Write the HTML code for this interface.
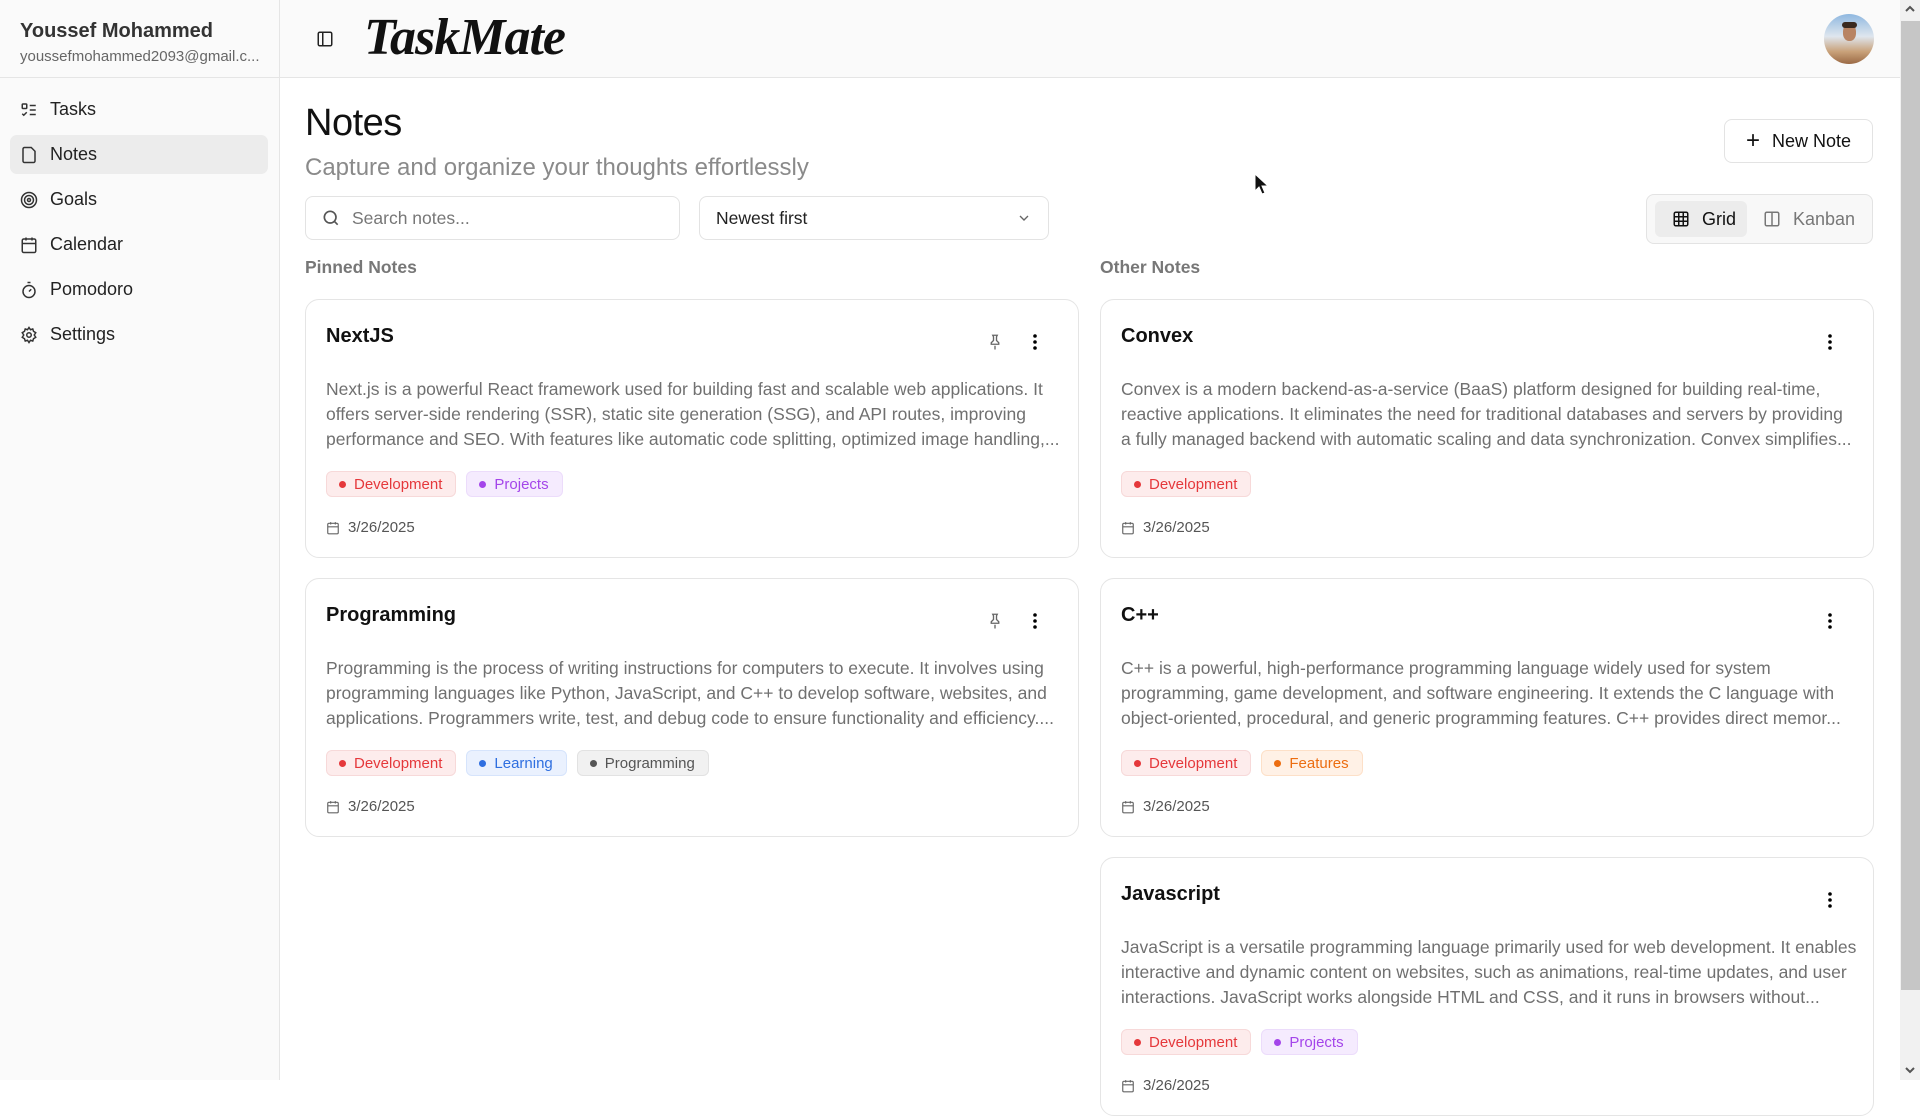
<!DOCTYPE html>
<html><head><meta charset="utf-8"><style>
*{box-sizing:border-box;margin:0;padding:0}
body{width:1920px;height:1080px;overflow:hidden;background:#fff;font-family:"Liberation Sans",sans-serif;color:#111;position:relative}
.sb{position:absolute;left:0;top:0;width:280px;height:1080px;background:#fafafa;border-right:1px solid #e5e5e5}
.sbh{height:78px;border-bottom:1px solid #e5e5e5;padding:20px 0 0 20px}
.sbh .n{font-size:20px;font-weight:bold;color:#333}
.sbh .e{font-size:15px;color:#666;margin-top:5px}
.nav{position:absolute;left:10px;width:258px;height:39px;border-radius:7px;display:flex;align-items:center;padding-left:10px;font-size:18px;color:#222}
.nav svg{margin-right:12px}
.nav.act{background:#ececec}
.top{position:absolute;left:280px;top:0;right:20px;height:78px;border-bottom:1px solid #e5e5e5;background:#fafafa}
.logo{position:absolute;left:364px;top:8px;font-family:"Liberation Serif",serif;font-style:italic;font-weight:bold;font-size:52px;letter-spacing:-1px;color:#111}
.h1{position:absolute;left:305px;top:102px;font-size:38px;color:#111;letter-spacing:-.5px;font-weight:normal;-webkit-text-stroke:0}
.sub{position:absolute;left:305px;top:154px;font-size:24px;color:#8a8a8a}
.btn{position:absolute;border:1px solid #e3e3e3;border-radius:8px;background:#fff}
.sec{position:absolute;top:257px;font-size:17.5px;font-weight:bold;color:#777}
.card{position:absolute;width:774px;border:1px solid #e5e5e5;border-radius:14px;background:#fff}
.card .t{position:absolute;left:20px;top:25px;font-size:20px;font-weight:bold;color:#111}
.card .d{position:absolute;left:20px;top:77px;width:735px;font-size:17.5px;line-height:25px;color:#707070}
.card .d div{white-space:nowrap;overflow:hidden}
.tags{position:absolute;left:20px;top:171px;display:flex;gap:10px}
.tag{height:26px;border-radius:6px;padding:0 13px 0 12px;font-size:15px;display:flex;align-items:center;border:1px solid}
.tag i{width:7px;height:7px;border-radius:50%;margin-right:8px;display:inline-block}
.red{background:#fdecec;color:#e5383b;border-color:#f7d9d9}.red i{background:#e5383b}
.pur{background:#f5ebfe;color:#a445ea;border-color:#ecdcfb}.pur i{background:#a445ea}
.blu{background:#eaf1fe;color:#2f6fe0;border-color:#d6e4fc}.blu i{background:#2f6fe0}
.gry{background:#f1f1f1;color:#555;border-color:#e2e2e2}.gry i{background:#555}
.ora{background:#fff1e6;color:#ec6d10;border-color:#fde0c8}.ora i{background:#ec6d10}
.date{position:absolute;left:20px;top:219px;font-size:15px;color:#555;display:flex;align-items:center;gap:8px}
.pin{position:absolute;left:680px;top:32px}
.dots{position:absolute;left:726px;top:33px}
.scroll{position:absolute;right:0;top:0;width:20px;height:1080px;background:#f1f1f1}
</style></head><body>
<div class="sb">
 <div class="sbh"><div class="n">Youssef Mohammed</div><div class="e">youssefmohammed2093@gmail.c...</div></div>
</div>
<div class="nav" style="top:90px"><svg width="18" height="18" viewBox="0 0 24 24" fill="none" stroke="#333" stroke-width="2"><rect x="3" y="4" width="6" height="6" rx="1"/><path d="m3 17 2 2 4-4M13 6h8M13 12h8M13 18h8"/></svg>Tasks</div>
<div class="nav act" style="top:135px"><svg width="18" height="18" viewBox="0 0 24 24" fill="none" stroke="#333" stroke-width="2"><path d="M15 2H6a2 2 0 0 0-2 2v16a2 2 0 0 0 2 2h12a2 2 0 0 0 2-2V7z"/></svg>Notes</div>
<div class="nav" style="top:180px"><svg width="18" height="18" viewBox="0 0 24 24" fill="none" stroke="#333" stroke-width="2"><circle cx="12" cy="12" r="10"/><circle cx="12" cy="12" r="6"/><circle cx="12" cy="12" r="2"/></svg>Goals</div>
<div class="nav" style="top:225px"><svg width="18" height="18" viewBox="0 0 24 24" fill="none" stroke="#333" stroke-width="2"><rect x="3" y="4" width="18" height="18" rx="2"/><path d="M16 2v4M8 2v4M3 10h18"/></svg>Calendar</div>
<div class="nav" style="top:270px"><svg width="18" height="18" viewBox="0 0 24 24" fill="none" stroke="#333" stroke-width="2"><circle cx="12" cy="14" r="8"/><path d="M10 2h4M12 14l3-3"/></svg>Pomodoro</div>
<div class="nav" style="top:315px"><svg width="18" height="18" viewBox="0 0 24 24" fill="none" stroke="#333" stroke-width="2"><circle cx="12" cy="12" r="3"/><path d="M12 2l2 3 3-1 1 3 3 2-2 3 2 3-3 2-1 3-3-1-2 3-2-3-3 1-1-3-3-2 2-3-2-3 3-2 1-3 3 1z"/></svg>Settings</div>
<div class="top"></div>
<svg style="position:absolute;left:316px;top:30px" width="18" height="18" viewBox="0 0 24 24" fill="none" stroke="#222" stroke-width="2"><rect x="3" y="3" width="18" height="18" rx="2"/><path d="M9 3v18"/></svg>
<div class="logo">TaskMate</div>
<div style="position:absolute;left:1824px;top:14px;width:50px;height:50px;border-radius:50%;background:linear-gradient(#8fb8e0 0%,#dfe6ee 45%,#c9a27a 75%,#9b6a45 100%);overflow:hidden"><div style="position:absolute;left:19px;top:10px;width:13px;height:17px;border-radius:45%;background:#b88464"></div><div style="position:absolute;left:18px;top:8px;width:15px;height:6px;border-radius:5px;background:#3a2a20"></div></div>
<div class="h1">Notes</div>
<div class="sub">Capture and organize your thoughts effortlessly</div>
<div class="btn" style="left:1724px;top:119px;width:149px;height:44px;display:flex;align-items:center;justify-content:center;gap:12px;font-size:18px"><span style="font-size:24px;line-height:1">+</span>New Note</div>
<div class="btn" style="left:305px;top:196px;width:375px;height:44px;display:flex;align-items:center;padding-left:15px;font-size:17.5px;color:#777"><svg width="20" height="20" viewBox="0 0 24 24" fill="none" stroke="#555" stroke-width="2" style="margin-right:11px"><circle cx="11" cy="11" r="7"/><path d="m20 20-4-4"/></svg>Search notes...</div>
<div class="btn" style="left:699px;top:196px;width:350px;height:44px;display:flex;align-items:center;padding-left:16px;font-size:17.5px;color:#222">Newest first<svg style="position:absolute;right:16px" width="16" height="16" viewBox="0 0 24 24" fill="none" stroke="#666" stroke-width="2"><path d="m6 9 6 6 6-6"/></svg></div>
<div class="btn" style="left:1646px;top:194px;width:227px;height:50px;background:#f8f8f8">
 <div style="position:absolute;left:8px;top:6px;width:92px;height:36px;border-radius:6px;background:#ececec;display:flex;align-items:center;padding-left:17px;font-size:18px;color:#111"><svg width="18" height="18" viewBox="0 0 24 24" fill="none" stroke="#111" stroke-width="2" style="margin-right:12px"><rect x="3" y="3" width="18" height="18" rx="2"/><path d="M3 9h18M3 15h18M9 3v18M15 3v18"/></svg>Grid</div>
 <div style="position:absolute;left:116px;top:6px;height:36px;display:flex;align-items:center;font-size:18px;color:#777"><svg width="18" height="18" viewBox="0 0 24 24" fill="none" stroke="#777" stroke-width="2" style="margin-right:12px"><rect x="3" y="3" width="18" height="18" rx="2"/><path d="M12 3v18"/></svg>Kanban</div>
</div>
<div class="sec" style="left:305px">Pinned Notes</div>
<div class="sec" style="left:1100px">Other Notes</div>

<div class="card" style="left:305px;top:299px;height:259px">
 <div class="t">NextJS</div>
 <svg class="pin" width="18" height="20" viewBox="0 0 24 24" fill="none" stroke="#666" stroke-width="1.8"><path d="M12 17v5M9 3h6l-1 2v5l3 3v2H7v-2l3-3V5z"/></svg>
 <svg class="dots" width="6" height="18" viewBox="0 0 6 18"><circle cx="3" cy="3" r="1.8"/><circle cx="3" cy="9" r="1.8"/><circle cx="3" cy="15" r="1.8"/></svg>
 <div class="d"><div>Next.js is a powerful React framework used for building fast and scalable web applications. It</div><div>offers server-side rendering (SSR), static site generation (SSG), and API routes, improving</div><div>performance and SEO. With features like automatic code splitting, optimized image handling,...</div></div>
 <div class="tags"><div class="tag red"><i></i>Development</div><div class="tag pur"><i></i>Projects</div></div>
 <div class="date"><svg width="14" height="14" viewBox="0 0 24 24" fill="none" stroke="#666" stroke-width="2"><rect x="3" y="4" width="18" height="18" rx="2"/><path d="M16 2v4M8 2v4M3 10h18"/></svg>3/26/2025</div>
</div>
<div class="card" style="left:305px;top:578px;height:259px">
 <div class="t">Programming</div>
 <svg class="pin" width="18" height="20" viewBox="0 0 24 24" fill="none" stroke="#666" stroke-width="1.8"><path d="M12 17v5M9 3h6l-1 2v5l3 3v2H7v-2l3-3V5z"/></svg>
 <svg class="dots" width="6" height="18" viewBox="0 0 6 18"><circle cx="3" cy="3" r="1.8"/><circle cx="3" cy="9" r="1.8"/><circle cx="3" cy="15" r="1.8"/></svg>
 <div class="d"><div>Programming is the process of writing instructions for computers to execute. It involves using</div><div>programming languages like Python, JavaScript, and C++ to develop software, websites, and</div><div>applications. Programmers write, test, and debug code to ensure functionality and efficiency....</div></div>
 <div class="tags"><div class="tag red"><i></i>Development</div><div class="tag blu"><i></i>Learning</div><div class="tag gry"><i></i>Programming</div></div>
 <div class="date"><svg width="14" height="14" viewBox="0 0 24 24" fill="none" stroke="#666" stroke-width="2"><rect x="3" y="4" width="18" height="18" rx="2"/><path d="M16 2v4M8 2v4M3 10h18"/></svg>3/26/2025</div>
</div>
<div class="card" style="left:1100px;top:299px;height:259px">
 <div class="t">Convex</div>
 <svg class="dots" width="6" height="18" viewBox="0 0 6 18"><circle cx="3" cy="3" r="1.8"/><circle cx="3" cy="9" r="1.8"/><circle cx="3" cy="15" r="1.8"/></svg>
 <div class="d"><div>Convex is a modern backend-as-a-service (BaaS) platform designed for building real-time,</div><div>reactive applications. It eliminates the need for traditional databases and servers by providing</div><div>a fully managed backend with automatic scaling and data synchronization. Convex simplifies...</div></div>
 <div class="tags"><div class="tag red"><i></i>Development</div></div>
 <div class="date"><svg width="14" height="14" viewBox="0 0 24 24" fill="none" stroke="#666" stroke-width="2"><rect x="3" y="4" width="18" height="18" rx="2"/><path d="M16 2v4M8 2v4M3 10h18"/></svg>3/26/2025</div>
</div>
<div class="card" style="left:1100px;top:578px;height:259px">
 <div class="t">C++</div>
 <svg class="dots" width="6" height="18" viewBox="0 0 6 18"><circle cx="3" cy="3" r="1.8"/><circle cx="3" cy="9" r="1.8"/><circle cx="3" cy="15" r="1.8"/></svg>
 <div class="d"><div>C++ is a powerful, high-performance programming language widely used for system</div><div>programming, game development, and software engineering. It extends the C language with</div><div>object-oriented, procedural, and generic programming features. C++ provides direct memor...</div></div>
 <div class="tags"><div class="tag red"><i></i>Development</div><div class="tag ora"><i></i>Features</div></div>
 <div class="date"><svg width="14" height="14" viewBox="0 0 24 24" fill="none" stroke="#666" stroke-width="2"><rect x="3" y="4" width="18" height="18" rx="2"/><path d="M16 2v4M8 2v4M3 10h18"/></svg>3/26/2025</div>
</div>
<div class="card" style="left:1100px;top:857px;height:259px">
 <div class="t">Javascript</div>
 <svg class="dots" width="6" height="18" viewBox="0 0 6 18"><circle cx="3" cy="3" r="1.8"/><circle cx="3" cy="9" r="1.8"/><circle cx="3" cy="15" r="1.8"/></svg>
 <div class="d"><div>JavaScript is a versatile programming language primarily used for web development. It enables</div><div>interactive and dynamic content on websites, such as animations, real-time updates, and user</div><div>interactions. JavaScript works alongside HTML and CSS, and it runs in browsers without...</div></div>
 <div class="tags"><div class="tag red"><i></i>Development</div><div class="tag pur"><i></i>Projects</div></div>
 <div class="date"><svg width="14" height="14" viewBox="0 0 24 24" fill="none" stroke="#666" stroke-width="2"><rect x="3" y="4" width="18" height="18" rx="2"/><path d="M16 2v4M8 2v4M3 10h18"/></svg>3/26/2025</div>
</div>
<div class="scroll"><div style="position:absolute;left:1px;top:21px;width:19px;height:969px;background:#c6c6c6"></div>
<svg style="position:absolute;left:5px;top:5px" width="10" height="8" viewBox="0 0 10 8"><path d="M1 6l4-4 4 4" stroke="#555" stroke-width="2" fill="none"/></svg>
<svg style="position:absolute;left:5px;top:1066px" width="10" height="8" viewBox="0 0 10 8"><path d="M1 2l4 4 4-4" stroke="#555" stroke-width="2" fill="none"/></svg></div>
<svg style="position:absolute;left:1254px;top:173px" width="16" height="22" viewBox="0 0 16 22"><path d="M1 1v17l4-4 3 7 3-1-3-7h6z" fill="#111" stroke="#fff" stroke-width="1"/></svg>
</body></html>
